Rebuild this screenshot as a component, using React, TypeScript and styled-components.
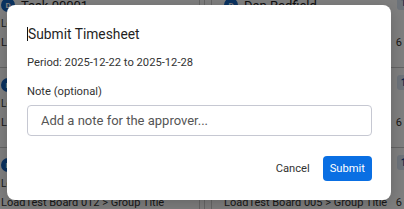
import React from "react";
import styled, { createGlobalStyle } from "styled-components";

const GlobalStyle = createGlobalStyle`
  html, body {
    margin: 0;
    padding: 0;
    background: #ffffff;
    font-family: Roboto, "Liberation Sans", Arial, sans-serif;
  }
`;

const Screen = styled.div`
  position: relative;
  width: 404px;
  height: 209px;
  overflow: hidden;
`;

const Board = styled.div`
  display: flex;
  margin-left: -11px;
  margin-top: -12px;
`;

const Column = styled.div<{ $width: number }>`
  width: ${(p) => p.$width}px;
  flex-shrink: 0;
  display: flex;
  flex-direction: column;
`;

const Gutter = styled.div`
  width: 13px;
  flex-shrink: 0;
  display: flex;
  justify-content: space-between;
  border-left: 1px solid #cfcfcf;
  border-right: 1px solid #cfcfcf;
  box-sizing: border-box;
  &::after {
    content: "";
    width: 1px;
    margin-left: 4px;
    background: #cfcfcf;
  }
`;

const TaskRow = styled.div`
  height: 80px;
  box-sizing: border-box;
  border-bottom: 1px solid #c8c8c8;
  padding: 10px 0 0 12px;
  display: flex;
  flex-direction: column;
  gap: 5px;
  position: relative;
`;

const RowHead = styled.div`
  display: flex;
  align-items: center;
  gap: 6px;
  height: 14px;
`;

const Avatar = styled.div`
  width: 14px;
  height: 14px;
  border-radius: 50%;
  background: #1565c0;
  color: #fff;
  font-size: 8px;
  font-weight: 700;
  display: flex;
  align-items: center;
  justify-content: center;
`;

const TaskName = styled.span`
  font-size: 13px;
  color: #222;
`;

const SubLine = styled.div<{ $size: number }>`
  font-size: ${(p) => p.$size}px;
  color: #333;
  line-height: 14px;
  white-space: nowrap;
  display: flex;
  justify-content: space-between;
  padding-right: 20px;
`;

const Badge = styled.span`
  position: absolute;
  right: 6px;
  top: 7px;
  background: #dbe6f5;
  color: #1a4f9c;
  font-size: 10px;
  font-weight: 700;
  padding: 2px 4px;
  border-radius: 3px;
`;

const Overlay = styled.div`
  position: absolute;
  inset: 0;
  background: rgba(0, 0, 0, 0.5);
  display: flex;
  align-items: flex-start;
  padding: 5px 0 0 7px;
`;

const Modal = styled.div`
  width: 384px;
  height: 195px;
  box-sizing: border-box;
  background: #ffffff;
  border-radius: 8px;
  padding: 20px 19px 19px 20px;
  display: flex;
  flex-direction: column;
  box-shadow: 0 4px 16px rgba(0, 0, 0, 0.2);
`;

const Title = styled.h2`
  margin: 0;
  font-size: 13.8px;
  line-height: 18px;
  font-weight: 400;
  color: #1f1f1f;
  display: flex;
  align-items: center;
`;

const Caret = styled.span`
  display: inline-block;
  width: 1px;
  height: 14px;
  background: #111;
`;

const Period = styled.p`
  margin: 12px 0 0;
  font-size: 11.2px;
  line-height: 16px;
  color: #333;
`;

const Label = styled.label`
  margin-top: 13px;
  font-size: 11.2px;
  line-height: 16px;
  color: #333;
`;

const NoteInput = styled.input`
  margin-top: 5px;
  height: 31px;
  box-sizing: border-box;
  border: 1px solid #c6c8d2;
  border-radius: 4px;
  padding: 0 13px;
  font-family: inherit;
  font-size: 13px;
  color: #333;
  outline: none;
  &::placeholder {
    color: #555;
  }
`;

const Footer = styled.div`
  margin-top: 20px;
  display: flex;
  justify-content: flex-end;
  align-items: center;
  gap: 13px;
`;

const ActionButton = styled.button<{ $primary?: boolean }>`
  height: 25px;
  padding: 0 ${(p) => (p.$primary ? 7 : 0)}px;
  border: none;
  border-radius: 4px;
  font-family: inherit;
  font-size: 11.2px;
  background: ${(p) => (p.$primary ? "#0a6fe3" : "transparent")};
  color: ${(p) => (p.$primary ? "#ffffff" : "#333")};
  cursor: pointer;
`;

const leftRows = [
  { name: "Task 00001", board: "LoadTest Board 009 > Group Title" },
  { name: "Task 00002", board: "LoadTest Board 011 > Group Title" },
  { name: "Task 00003", board: "LoadTest Board 012 > Group Title" },
];

const rightRows = [
  { name: "Dan Redfield", board: "LoadTest Board 002 > Group Title" },
  { name: "Dan Redfield", board: "LoadTest Board 004 > Group Title" },
  { name: "Dan Redfield", board: "LoadTest Board 005 > Group Title" },
];

const App = () => {
  return (
    <Screen>
      <GlobalStyle />
      <Board>
        <Column $width={210}>
          {leftRows.map((r) => (
            <TaskRow key={r.name}>
              <RowHead>
                <Avatar>D</Avatar>
                <TaskName>{r.name}</TaskName>
              </RowHead>
              <SubLine $size={10}>Log time</SubLine>
              <SubLine $size={11}>{r.board}</SubLine>
            </TaskRow>
          ))}
        </Column>
        <Gutter />
        <Column $width={210}>
          {rightRows.map((r, i) => (
            <TaskRow key={i}>
              <RowHead>
                <Avatar>D</Avatar>
                <TaskName>{r.name}</TaskName>
              </RowHead>
              <SubLine $size={10}>Log time</SubLine>
              <SubLine $size={11}>
                {r.board}
                <span>6</span>
              </SubLine>
              <Badge>1h</Badge>
            </TaskRow>
          ))}
        </Column>
      </Board>
      <Overlay>
        <Modal>
          <Title>
            <Caret />
            Submit Timesheet
          </Title>
          <Period>Period: 2025-12-22 to 2025-12-28</Period>
          <Label>Note (optional)</Label>
          <NoteInput placeholder="Add a note for the approver..." />
          <Footer>
            <ActionButton>Cancel</ActionButton>
            <ActionButton $primary>Submit</ActionButton>
          </Footer>
        </Modal>
      </Overlay>
    </Screen>
  );
};

export default App;
